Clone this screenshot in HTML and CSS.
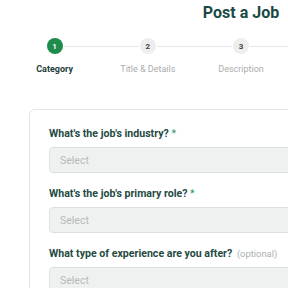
FILE: index.html
```html
<!DOCTYPE html>
<html>
<head>
<meta charset="utf-8">
<link rel="stylesheet" href="styles.css">
</head>
<body>
<div class="page">
  <h1 class="title">Post a Job</h1>
  <ol class="steps">
    <li class="step active"><span class="dot">1</span><span class="name">Category</span></li>
    <li class="step"><span class="dot">2</span><span class="name">Title &amp; Details</span></li>
    <li class="step"><span class="dot">3</span><span class="name">Description</span></li>
    <li class="step"><span class="dot">4</span><span class="name">Location</span></li>
    <li class="step last"><span class="dot">5</span><span class="name">Review</span></li>
  </ol>
  <div class="card">
    <div class="field">
      <label class="label">What's the job's industry? <span class="req">*</span></label>
      <div class="select">Select</div>
    </div>
    <div class="field">
      <label class="label">What's the job's primary role? <span class="req">*</span></label>
      <div class="select">Select</div>
    </div>
    <div class="field">
      <label class="label">What type of experience are you after? <span class="opt">(optional)</span></label>
      <div class="select">Select</div>
    </div>
  </div>
</div>
</body>
</html>
```
FILE: styles.css
```css
html, body {
  margin: 0;
  padding: 0;
  background: #ffffff;
  overflow: hidden;
}
body {
  font-family: Roboto, "Liberation Sans", sans-serif;
  width: 288px;
  height: 288px;
}
.page {
  width: 466px;
  padding: 0 0 0 8px;
}
.title {
  margin: 0;
  padding-top: 3px;
  text-align: center;
  font-size: 16px;
  line-height: 20px;
  font-weight: 700;
  color: #1b4a44;
}
.steps {
  list-style: none;
  margin: 15px 0 0 0;
  padding: 0;
  display: flex;
}
.step {
  flex: 1;
  display: flex;
  flex-direction: column;
  align-items: center;
  position: relative;
}
.step::after {
  content: "";
  position: absolute;
  top: 8px;
  left: calc(50% + 9px);
  width: calc(100% - 18px);
  height: 1px;
  background: #e6e8e7;
}
.step.last::after {
  display: none;
}
.dot {
  width: 16px;
  height: 16px;
  border-radius: 50%;
  background: #eeeeee;
  color: #444;
  font-size: 8px;
  font-weight: 700;
  display: flex;
  align-items: center;
  justify-content: center;
}
.step.active .dot {
  background: #1f8c4c;
  color: #fff;
}
.name {
  margin-top: 9px;
  font-size: 9px;
  line-height: 12px;
  color: #a9adac;
  white-space: nowrap;
}
.step.active .name {
  color: #24403c;
  font-weight: 700;
}
.card {
  margin: 34px 0 0 21px;
  border: 1px solid #e2e5e4;
  border-radius: 6px;
  padding: 17px 19px 20px 19px;
  display: flex;
  flex-direction: column;
  gap: 14px;
}
.field {
  display: flex;
  flex-direction: column;
  gap: 6px;
}
.label {
  font-size: 10.6px;
  line-height: 14px;
  font-weight: 700;
  color: #1f4a44;
  white-space: nowrap;
}
.req {
  color: #2f9a5a;
  font-weight: 400;
}
.opt {
  color: #aab0ae;
  font-weight: 400;
  font-size: 9.4px;
  margin-left: 2px;
}
.select {
  height: 24px;
  border: 1px solid #dde2e0;
  border-radius: 4px;
  background: #eef1f0;
  color: #b5bab8;
  font-size: 10.5px;
  display: flex;
  align-items: center;
  padding-left: 10px;
}
```
